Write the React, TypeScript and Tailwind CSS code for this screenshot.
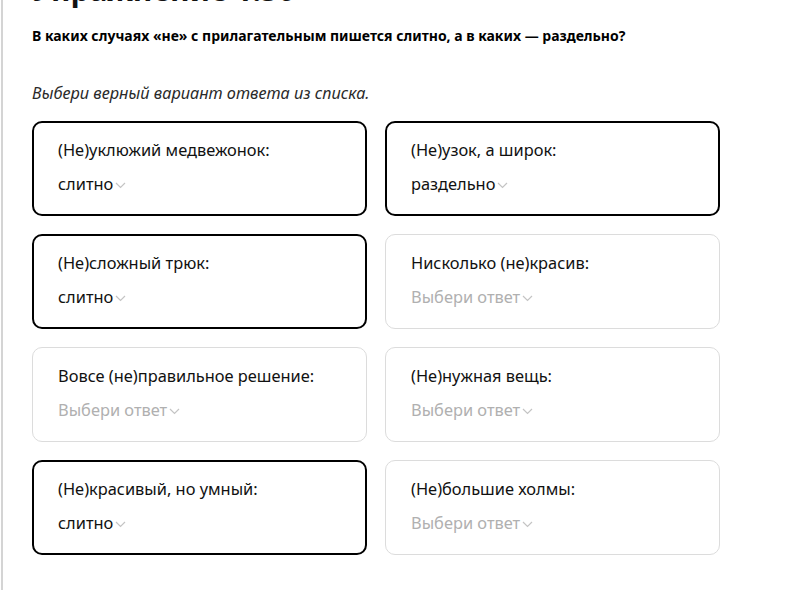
import React from "react";

interface Item {
    label: string;
    answer?: string;
}

const items: Item[] = [
    { label: "(Не)уклюжий медвежонок:", answer: "слитно" },
    { label: "(Не)узок, а широк:", answer: "раздельно" },
    { label: "(Не)сложный трюк:", answer: "слитно" },
    { label: "Нисколько (не)красив:" },
    { label: "Вовсе (не)правильное решение:" },
    { label: "(Не)нужная вещь:" },
    { label: "(Не)красивый, но умный:", answer: "слитно" },
    { label: "(Не)большие холмы:" },
];

const Chevron: React.FC = () => (
    <svg width="11" height="7" viewBox="0 0 11 7" className="ml-[2px] mt-[3px]">
        <path d="M1 1l4.5 4.5L10 1" fill="none" stroke="#c4c4c4" strokeWidth="1.2" />
    </svg>
);

const App: React.FC = () => {
    return (
        <div className="w-[802px] h-[590px] overflow-hidden bg-white" style={{ fontFamily: '"Noto Sans", "Open Sans", sans-serif' }}>
            <div className="ml-[1px] h-full flex flex-col border-l-2 border-[#d4d4d4] pl-[29px]">
                <h1 className="text-[30px] font-bold leading-[36px] -mt-[28px] text-[#111]">Упражнение 1.30</h1>
                <p className="mt-[18px] text-[14px] font-bold leading-[20px] text-black">
                    В каких случаях «не» с прилагательным пишется слитно, а в каких — раздельно?
                </p>
                <p className="mt-[35px] text-[16.3px] italic leading-[24px] text-[#2a2a2a]">Выбери верный вариант ответа из списка.</p>

                <div className="mt-[16px] grid grid-cols-[335px_335px] gap-x-[18px] gap-y-[18px]">
                    {items.map((item, index) => (
                        <div
                            key={index}
                            className={
                                item.answer
                                    ? "h-[95px] rounded-[10px] border-2 border-black px-[24px] pt-[15px]"
                                    : "h-[95px] rounded-[10px] border border-[#dcdcdc] px-[25px] pt-[16px]"
                            }
                        >
                            <div className="text-[16.4px] leading-[24px] text-[#111]">{item.label}</div>
                            <div className="mt-[10px] flex items-center text-[16.4px] leading-[24px]">
                                <span className={item.answer ? "text-[#111]" : "text-[#b0b0b0]"}>
                                    {item.answer || "Выбери ответ"}
                                </span>
                                <Chevron />
                            </div>
                        </div>
                    ))}
                </div>
            </div>
        </div>
    );
};

export default App;
